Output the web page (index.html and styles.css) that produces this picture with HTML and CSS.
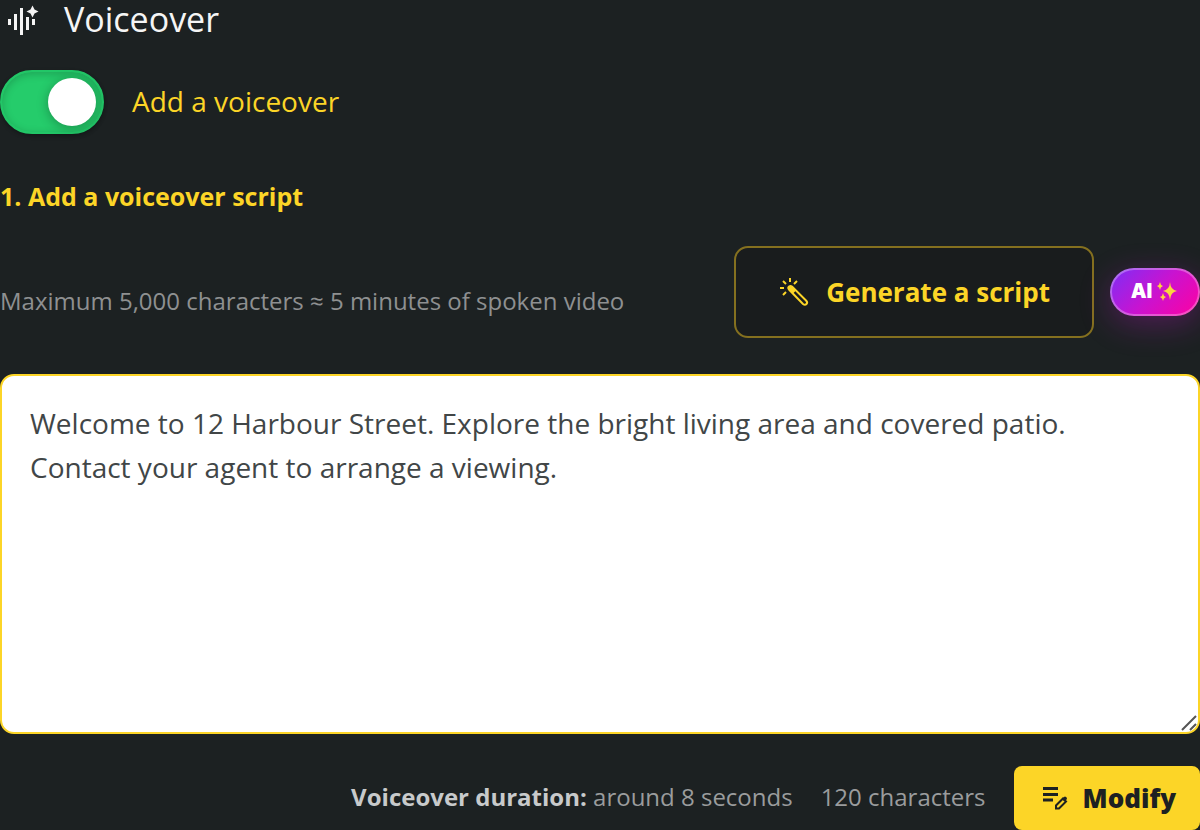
FILE: index.html
```html
<!DOCTYPE html>
<html lang="en">
<head>
    <meta charset="UTF-8">
    <meta name="viewport" content="width=device-width, initial-scale=1.0">
    <title>Voiceover</title>
    <link rel="stylesheet" href="styles.css">
</head>
<body>
<main class="voiceover">
    <h2 class="title">
        <svg class="title-icon" viewBox="0 0 32 32" aria-hidden="true">
            <path d="M0 16h3v6H0zM6 11h3v16H6zM12 5h3v27h-3zM18 14h3v13h-3zM24 16h3v6h-3z"/>
            <path d="M24.500 2.500L26.500 6.500L30.500 8.500L26.500 10.500L24.500 14.500L22.500 10.500L18.500 8.500L22.500 6.500z"/>
        </svg>
        Voiceover
    </h2>

    <div class="toggle-row">
        <input type="checkbox" class="toggle" id="addVoiceover" checked>
        <label for="addVoiceover">Add a voiceover</label>
    </div>

    <h3 class="step"><label for="script">1. Add a voiceover script</label></h3>

    <div class="script-bar">
        <p class="hint">Maximum 5,000 characters ≈ 5 minutes of spoken video</p>
        <button type="button" class="generate">
            <svg class="wand" viewBox="0 0 32 32" aria-hidden="true">
                <path d="M12 2v4M5 5l3 3M19 5l-3 3M2 12h4M5 19l3-3"/>
                <path d="M11 13.500q-1.500-2 0-3t3 0L28 24.500q2 2 .500 3.500t-3.500 0z"/>
                <path class="tip" d="M10.500 11.500q1-2.500 3.500-1l4 4-3 3-4-4z"/>
            </svg>
            Generate a script
        </button>
        <span class="ai-badge">AI
            <svg class="sparkles" viewBox="0 0 20 20" aria-hidden="true">
                <path d="M13 1Q13.500 9 20 10Q13.500 11 13 19Q12.500 11 6 10Q12.500 9 13 1z"/>
                <path d="M3 1Q3.300 4 6 5Q3.300 6 3 9Q2.700 6 0 5Q2.700 4 3 1zM6 12Q6.300 15 9 16Q6.300 17 6 20Q5.700 17 3 16Q5.700 15 6 12z"/>
            </svg>
        </span>
    </div>

    <div class="script-box">
        <textarea id="script" spellcheck="false">Welcome to 12 Harbour Street. Explore the bright living area and covered patio. Contact your agent to arrange a viewing.</textarea>
        <svg class="grip" viewBox="0 0 16 16" aria-hidden="true"><path d="M1 15L15 1M9 15l6-6"/></svg>
    </div>

    <div class="footer">
        <span><strong>Voiceover duration:</strong> around 8 seconds</span>
        <span>120 characters</span>
        <button type="button" class="modify">
            <svg class="edit" viewBox="0 0 26 24" aria-hidden="true">
                <path d="M1 2.500h15M1 8.500h15M1 14h10"/>
                <path d="M14 22.500v-3l7-7 3 3-7 7z" class="pencil"/>
                <path d="M20 13l2-2q1-1 2 0l.500.500q1 1 0 2l-2 2z" class="pencil end"/>
            </svg>
            Modify
        </button>
    </div>
</main>
</body>
</html>
```
FILE: styles.css
```css
* {
    box-sizing: border-box;
}
body {
    margin: 0;
    background: #1c2122;
    color: #f5f5f5;
    font-family: "Open Sans", sans-serif;
    font-size: 24px;
}
h2, h3, p {
    margin: 0;
}
button {
    display: flex;
    align-items: center;
    font-family: inherit;
    font-weight: 700;
    cursor: pointer;
}
.title {
    display: flex;
    align-items: center;
    gap: 24px;
    padding-left: 8px;
    font-size: 34px;
    font-weight: 400;
    line-height: 38px;
}
.title-icon {
    width: 32px;
    height: 32px;
    fill: #f5f5f5;
}
.toggle-row {
    display: flex;
    align-items: center;
    gap: 28px;
    margin-top: 32px;
    color: #fcd527;
    font-size: 28px;
}
.toggle-row label {
    padding-bottom: 2px;
}
.toggle {
    appearance: none;
    display: flex;
    justify-content: flex-end;
    width: 104px;
    height: 64px;
    margin: 0;
    padding: 6px;
    border: 2px solid #22c667;
    border-radius: 32px;
    background: #25cc6b;
    box-shadow: inset 0 2px 8px rgba(0, 0, 0, 0.2), 0 2px 4px rgba(0, 0, 0, 0.3);
    cursor: pointer;
}
.toggle::before {
    content: "";
    width: 48px;
    height: 48px;
    border-radius: 50%;
    background: #fff;
    box-shadow: 0 2px 12px rgba(0, 0, 0, 0.3);
}
.toggle:not(:checked) {
    justify-content: flex-start;
    border-color: #666;
    background: #555;
}
.step {
    margin-top: 45px;
    color: #fcd527;
    font-size: 25px;
    font-weight: 700;
    line-height: 34px;
}
.script-bar {
    display: flex;
    align-items: center;
    gap: 16px;
    margin-top: 33px;
}
.hint {
    flex: 1;
    padding-top: 18px;
    color: #8e9091;
    line-height: 34px;
}
.generate {
    gap: 16px;
    height: 92px;
    padding: 0 42px;
    border: 2px solid #84701f;
    border-radius: 14px;
    background: #191c1d;
    color: #fcd527;
    font-size: 26px;
}
.wand {
    width: 32px;
    height: 32px;
    fill: none;
    stroke: #fcd527;
    stroke-width: 2;
}
.wand .tip {
    fill: #fcd527;
    stroke: none;
}
.ai-badge {
    display: flex;
    align-items: center;
    justify-content: center;
    gap: 5px;
    width: 90px;
    height: 48px;
    padding: 0 2px 2px 0;
    border: 2px solid rgba(255, 255, 255, 0.3);
    border-radius: 24px;
    background: linear-gradient(135deg, #7b2ff7, #c913d0 50%, #ff00a0) border-box;
    box-shadow: 0 8px 32px rgba(201, 19, 208, 0.3);
    color: #fff;
    font-family: Inter, sans-serif;
    font-size: 20px;
    font-weight: 900;
}
.sparkles {
    width: 20px;
    height: 20px;
    fill: #fcd53f;
}
.script-box {
    position: relative;
    margin-top: 36px;
}
.script-box textarea {
    display: block;
    width: 100%;
    height: 360px;
    padding: 25px 28px;
    border: 2px solid #fcd527;
    border-radius: 14px;
    outline: none;
    background: #fff;
    color: #414647;
    font-family: inherit;
    font-size: 28px;
    line-height: 44px;
    resize: none;
}
.grip {
    position: absolute;
    right: 3px;
    bottom: 3px;
    width: 16px;
    height: 16px;
    fill: none;
    stroke: #555;
    stroke-width: 2;
}
.footer {
    display: flex;
    align-items: center;
    justify-content: flex-end;
    gap: 28px;
    margin-top: 32px;
    color: #9a9c9d;
}
.footer span {
    padding-bottom: 4px;
}
.footer strong {
    color: #c8cacb;
}
.modify {
    gap: 15px;
    height: 64px;
    padding: 0 24px 0 28px;
    border: 0;
    border-radius: 8px;
    background: #fcd527;
    color: #1d2122;
    font-size: 26px;
    font-weight: 800;
}
.edit {
    width: 26px;
    height: 24px;
    fill: none;
    stroke: #1d2122;
    stroke-width: 3;
}
.edit .pencil {
    stroke-width: 2;
}
.edit .end {
    fill: #1d2122;
    stroke: none;
}
```
